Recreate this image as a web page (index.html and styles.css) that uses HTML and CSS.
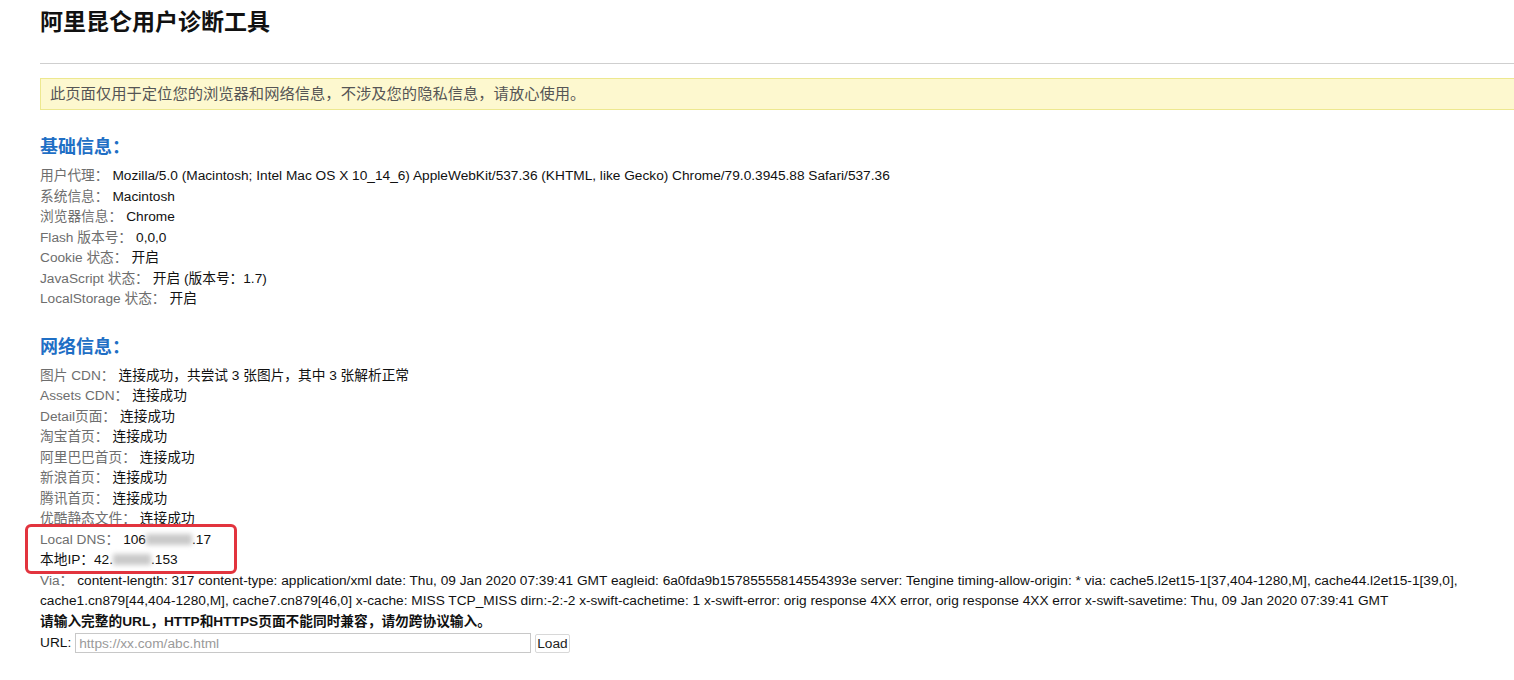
FILE: index.html
```html
<!DOCTYPE html>
<html lang="zh-CN">
<head>
    <meta charset="UTF-8">
    <title>阿里昆仑用户诊断工具</title>
    <link rel="stylesheet" href="styles.css">
</head>
<body>
    <div class="page">
        <h1 class="title">阿里昆仑用户诊断工具</h1>
        <hr class="divider">
        <div class="notice">此页面仅用于定位您的浏览器和网络信息，不涉及您的隐私信息，请放心使用。</div>

        <h2 class="section-title">基础信息：</h2>
        <div class="info-list">
            <div class="row"><span class="label">用户代理：</span><span class="value">Mozilla/5.0 (Macintosh; Intel Mac OS X 10_14_6) AppleWebKit/537.36 (KHTML, like Gecko) Chrome/79.0.3945.88 Safari/537.36</span></div>
            <div class="row"><span class="label">系统信息：</span><span class="value">Macintosh</span></div>
            <div class="row"><span class="label">浏览器信息：</span><span class="value">Chrome</span></div>
            <div class="row"><span class="label">Flash 版本号：</span><span class="value">0,0,0</span></div>
            <div class="row"><span class="label">Cookie 状态：</span><span class="value">开启</span></div>
            <div class="row"><span class="label">JavaScript 状态：</span><span class="value">开启 (版本号：1.7)</span></div>
            <div class="row"><span class="label">LocalStorage 状态：</span><span class="value">开启</span></div>
        </div>

        <h2 class="section-title">网络信息：</h2>
        <div class="info-list">
            <div class="row"><span class="label">图片 CDN：</span><span class="value">连接成功，共尝试 3 张图片，其中 3 张解析正常</span></div>
            <div class="row"><span class="label">Assets CDN：</span><span class="value">连接成功</span></div>
            <div class="row"><span class="label">Detail页面：</span><span class="value">连接成功</span></div>
            <div class="row"><span class="label">淘宝首页：</span><span class="value">连接成功</span></div>
            <div class="row"><span class="label">阿里巴巴首页：</span><span class="value">连接成功</span></div>
            <div class="row"><span class="label">新浪首页：</span><span class="value">连接成功</span></div>
            <div class="row"><span class="label">腾讯首页：</span><span class="value">连接成功</span></div>
            <div class="row"><span class="label">优酷静态文件：</span><span class="value">连接成功</span></div>
            <div class="highlight">
                <div class="row"><span class="label">Local DNS：</span><span class="value">106<span class="masked masked-dns"></span>.17</span></div>
                <div class="row"><span class="value">本地IP：42.<span class="masked masked-ip"></span>.153</span></div>
            </div>
            <div class="row"><span class="label">Via：</span><span class="value">content-length: 317 content-type: application/xml date: Thu, 09 Jan 2020 07:39:41 GMT eagleid: 6a0fda9b15785555814554393e server: Tengine timing-allow-origin: * via: cache5.l2et15-1[37,404-1280,M], cache44.l2et15-1[39,0], cache1.cn879[44,404-1280,M], cache7.cn879[46,0] x-cache: MISS TCP_MISS dirn:-2:-2 x-swift-cachetime: 1 x-swift-error: orig response 4XX error, orig response 4XX error x-swift-savetime: Thu, 09 Jan 2020 07:39:41 GMT</span></div>
            <div class="row tip">请输入完整的URL，HTTP和HTTPS页面不能同时兼容，请勿跨协议输入。</div>
            <div class="row url-row">
                <span class="url-label">URL:</span>
                <input class="url-input" type="text" placeholder="https://xx.com/abc.html">
                <button class="load-btn">Load</button>
            </div>
        </div>
    </div>
</body>
</html>
```

FILE: styles.css
```css
html, body {
    margin: 0;
    padding: 0;
    background: #ffffff;
}
.page {
    padding: 0 0 0 40px;
    font-family: "Liberation Sans", "Noto Sans CJK SC", sans-serif;
    font-size: 13.7px;
    color: #111;
}
.title {
    margin: 0;
    padding-top: 8px;
    font-size: 23px;
    line-height: 29px;
    font-weight: bold;
    color: #111;
}
.divider {
    margin: 26px 0 0 0;
    border: 0;
    border-top: 1px solid #cfcfcf;
    height: 0;
}
.notice {
    margin-top: 14px;
    padding: 0 9px;
    height: 30px;
    line-height: 30px;
    background-color: #fdf8cf;
    border: 1px solid #ede88f;
    border-right: 0;
    color: #555;
    font-size: 15.3px;
}
.section-title {
    margin: 0;
    font-size: 18px;
    font-weight: bold;
    color: #1f6fc5;
    line-height: 24px;
}
.notice + .section-title {
    margin-top: 25px;
}
.info-list {
    margin-top: 7px;
}
.info-list + .section-title {
    margin-top: 25px;
}
.row {
    line-height: 20.5px;
}
.label {
    color: #6e6e6e;
    margin-right: 4px;
}
.value {
    color: #111;
}
.masked {
    display: inline-block;
    height: 11px;
    background: #c9c9c9;
    filter: blur(2.5px);
    vertical-align: -1px;
}
.masked-dns {
    width: 46px;
}
.masked-ip {
    width: 38px;
}
.highlight {
    position: relative;
}
.highlight::after {
    content: "";
    position: absolute;
    left: -15px;
    top: -6px;
    width: 212px;
    height: 50px;
    box-sizing: border-box;
    border: 3px solid #e2343e;
    border-radius: 6px;
}
.tip {
    font-weight: bold;
    color: #111;
}
.url-row {
    display: flex;
    align-items: center;
    margin-top: 1px;
}
.url-label {
    margin-right: 4px;
}
.url-input {
    width: 448px;
    height: 16px;
    padding: 1px 3px;
    border: 1px solid #c8c8c8;
    font-family: "Liberation Sans", sans-serif;
    font-size: 13.7px;
    color: #333;
}
.url-input::placeholder {
    color: #9a9a9a;
}
.load-btn {
    margin-left: 4px;
    height: 19px;
    padding: 0 1px;
    border: 1px solid #d8d8d8;
    border-radius: 2px;
    background: #ffffff;
    font-family: "Liberation Sans", sans-serif;
    font-size: 13.7px;
    color: #222;
}
```
